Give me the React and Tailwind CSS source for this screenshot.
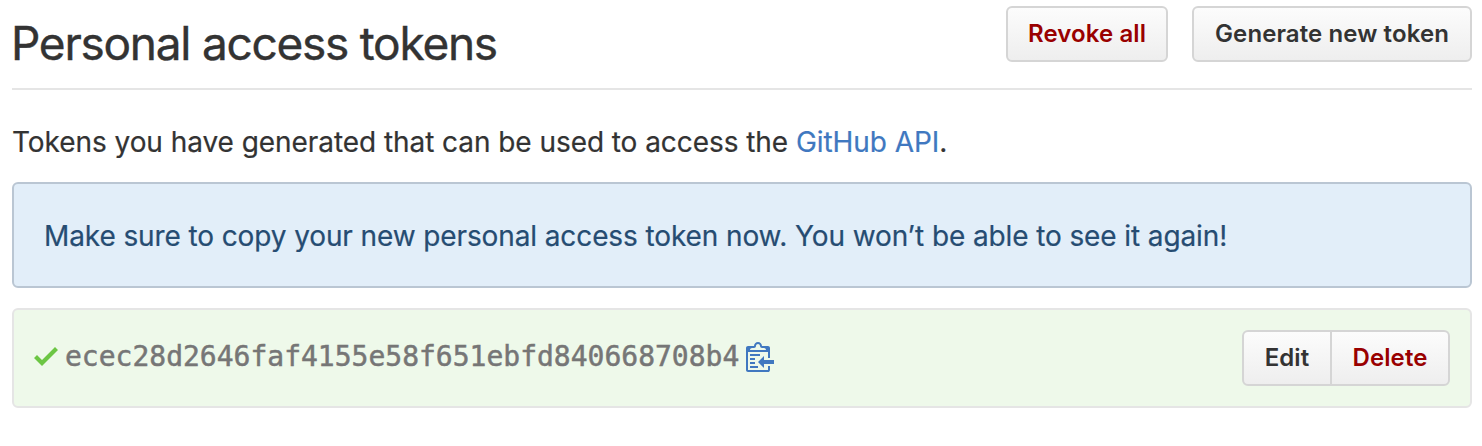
function CheckIcon() {
  return (
    <svg className="block h-8 w-6 shrink-0 fill-[#6cc644]" viewBox="0 0 12 16" aria-hidden="true">
      <path d="M12 5l-8 8-4-4 1.5-1.5L4 10l6.5-6.5L12 5z" />
    </svg>
  );
}

function ClippyIcon() {
  return (
    <svg className="block h-8 w-7 fill-[#4078c0]" viewBox="0 0 14 16" aria-hidden="true">
      <path
        fillRule="evenodd"
        d="M2 13h4v1H2v-1zm5-6H2v1h5V7zm2 3V8l-3 3 3 3v-2h5v-2H9zM4.5 9H2v1h2.5V9zM2 12h2.5v-1H2v1zm9 1h1v2c-.02.28-.11.52-.3.7-.19.18-.42.28-.7.3H1c-.55 0-1-.45-1-1V4c0-.55.45-1 1-1h3c0-1.11.89-2 2-2 1.11 0 2 .89 2 2h3c.55 0 1 .45 1 1v5h-1V6H1v9h10v-2zM2 5h8c0-.55-.45-1-1-1H8c-.55 0-1-.45-1-1s-.45-1-1-1-1 .45-1 1-.45 1-1 1H3c-.55 0-1 .45-1 1z"
      />
    </svg>
  );
}

function Button({ className, children }) {
  return (
    <button
      type="button"
      className={`h-14 border-2 border-[#d5d5d5] bg-linear-to-b from-[#fcfcfc] to-[#eeeeee] text-center text-[24px] leading-none font-semibold tracking-[0.1px] whitespace-nowrap ${className}`}
    >
      {children}
    </button>
  );
}

export default function App() {
  return (
    <main className="h-[446px] bg-white pt-1.5 pr-2.5 pl-3 font-['Inter',sans-serif] text-[#333333]">
      <header className="flex h-[84px] items-start justify-between border-b-2 border-[#e5e5e5]">
        <h1 className="-ml-px pt-[7px] text-[46px] leading-[60px] font-normal tracking-[-1.26px] whitespace-nowrap [-webkit-text-stroke:0.4px]">
          Personal access tokens
        </h1>
        <div className="flex gap-6">
          <Button className="w-[162px] rounded-md text-[#990000]">Revoke all</Button>
          <Button className="w-[280px] rounded-md">Generate new token</Button>
        </div>
      </header>

      <p className="mt-[31px] h-[61px] text-[28px] leading-[42px] tracking-[-0.06px] whitespace-nowrap [-webkit-text-stroke:0.2px]">
        Tokens you have generated that can be used to access the{' '}
        <a href="#api" className="text-[#4078c0]">GitHub API</a>.
      </p>

      <div className="flex h-[106px] items-center rounded-md border-2 border-[#bac6d3] bg-[#e2eef9] px-[30px] pt-0.5 text-[28px] tracking-[-0.11px] whitespace-nowrap text-[#264c72] [-webkit-text-stroke:0.2px]">
        Make sure to copy your new personal access token now. You won’t be able to see it again!
      </div>

      <section className="mt-5 flex h-[100px] items-center rounded-md border-2 border-[#e5e5e5] bg-[#eef9ea] px-5">
        <div className="flex items-center pb-1">
          <CheckIcon />
          <code className="ml-[7px] pt-0.5 font-['DejaVu_Sans_Mono',monospace] text-[28px] leading-8 text-[#767676] [-webkit-text-stroke:0.5px]">
            ecec28d2646faf4155e58f651ebfd840668708b4
          </code>
          <button type="button" aria-label="Copy token" className="ml-[7px]">
            <ClippyIcon />
          </button>
        </div>
        <div className="ml-auto flex">
          <Button className="w-[90px] rounded-l-md">Edit</Button>
          <Button className="-ml-0.5 w-[120px] rounded-r-md text-[#990000]">Delete</Button>
        </div>
      </section>
    </main>
  );
}
